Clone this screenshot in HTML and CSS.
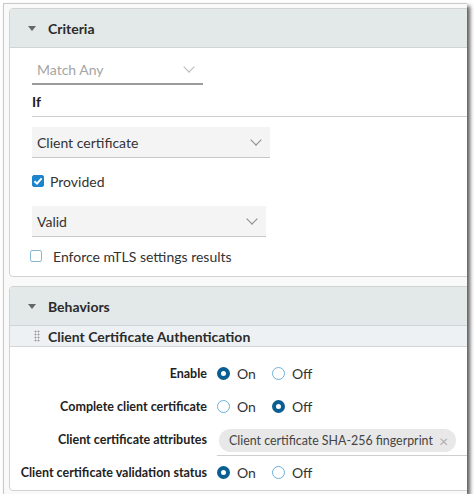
FILE: index.html
```html
<!DOCTYPE html>
<html lang="en">
<head>
    <meta charset="UTF-8">
    <meta name="viewport" content="width=device-width, initial-scale=1.0">
    <title>Rule editor</title>
    <link rel="stylesheet" href="styles.css">
</head>
<body>
    <div class="window">
        <!-- Criteria -->
        <section class="panel criteria">
            <div class="panel-head">
                <span class="caret"></span>
                <span class="panel-title">Criteria</span>
            </div>
            <div class="panel-body">
                <div class="select match">
                    <span>Match Any</span>
                    <span class="chevron"></span>
                </div>
                <div class="if-row">If</div>
                <div class="select filled wide">
                    <span>Client certificate</span>
                    <span class="chevron"></span>
                </div>
                <label class="check-row">
                    <span class="checkbox checked">
                        <svg viewBox="0 0 12 12" width="12" height="12"><path d="M2.5 6.2 L5 8.6 L9.6 3.4" fill="none" stroke="#fff" stroke-width="2"/></svg>
                    </span>
                    Provided
                </label>
                <div class="select filled valid">
                    <span>Valid</span>
                    <span class="chevron"></span>
                </div>
                <label class="check-row enforce">
                    <span class="checkbox"></span>
                    Enforce mTLS settings results
                </label>
            </div>
        </section>

        <!-- Behaviors -->
        <section class="panel behaviors">
            <div class="panel-head">
                <span class="caret"></span>
                <span class="panel-title">Behaviors</span>
            </div>
            <div class="sub-head">
                <span class="grip"></span>
                Client Certificate Authentication
            </div>
            <div class="options">
                <div class="opt-label">Enable</div>
                <div class="opt-value">
                    <span class="radio on"></span><span class="radio-text">On</span>
                    <span class="radio"></span><span class="radio-text">Off</span>
                </div>

                <div class="opt-label">Complete client certificate</div>
                <div class="opt-value">
                    <span class="radio"></span><span class="radio-text">On</span>
                    <span class="radio on"></span><span class="radio-text">Off</span>
                </div>

                <div class="opt-label">Client certificate attributes</div>
                <div class="opt-value tags">
                    <span class="tag">Client certificate SHA-256 fingerprint <span class="tag-x">&times;</span></span>
                </div>

                <div class="opt-label">Client certificate validation status</div>
                <div class="opt-value">
                    <span class="radio on"></span><span class="radio-text">On</span>
                    <span class="radio"></span><span class="radio-text">Off</span>
                </div>
            </div>
        </section>
    </div>
</body>
</html>
```

FILE: styles.css
```css
/* Page */
body {
    margin: 0;
    background: #fff;
    font-family: Lato, "Open Sans", sans-serif;
    color: #333;
}

/* Screenshot window frame */
.window {
    margin: 3px 0 0 3px;
    width: 458px;
    height: 486px;
    padding: 4px 0 0 5px;
    border-left: 1px solid #c9c9c9;
    border-top: 1px solid #c9c9c9;
    background: #f9f9f9;
    box-shadow: 3px 3px 4px rgba(0, 0, 0, 0.65);
    overflow: hidden;
}

/* Panels */
.panel {
    width: 480px;
    background: #fff;
    border: 1px solid #d2d2d2;
    border-radius: 4px;
}

.behaviors {
    margin-top: 9px;
    height: 203px;
}

.panel-head {
    height: 38px;
    display: flex;
    align-items: center;
    background: #e3e8e9;
    border-bottom: 1px solid #cfd4d5;
    border-radius: 4px 4px 0 0;
}

.caret {
    width: 0;
    height: 0;
    margin: 0 12px 0 18px;
    border-left: 4.5px solid transparent;
    border-right: 4.5px solid transparent;
    border-top: 5px solid #666;
}

.panel-title {
    font-size: 14px;
    font-weight: bold;
    color: #2b2b2b;
}

.panel-body {
    padding: 7px 0 8px 22px;
}

/* Selects */
.select {
    display: flex;
    align-items: center;
    justify-content: space-between;
    height: 29px;
    padding: 0 10px 0 5px;
    font-size: 14px;
    box-sizing: border-box;
}

.select.match {
    width: 171px;
    color: #a5a5a5;
    border-bottom: 2px solid #9c9c9c;
    height: 30px;
}

.select.filled {
    background: #f4f4f4;
    border-bottom: 1px solid #c8c8c8;
    height: 31px;
    color: #333;
}

.select.wide {
    width: 238px;
    margin-top: 10px;
}

.select.valid {
    width: 234px;
    margin-top: 13px;
}

.chevron {
    width: 7px;
    height: 7px;
    border-right: 1.3px solid #8a8a8a;
    border-bottom: 1.3px solid #8a8a8a;
    transform: rotate(45deg);
    margin-top: -5px;
}

.match .chevron {
    border-color: #b8b8b8;
}

.if-row {
    height: 31px;
    line-height: 33px;
    font-size: 14px;
    font-weight: bold;
    color: #222;
    border-bottom: 1px solid #cfcfcf;
}

/* Checkboxes */
.check-row {
    display: flex;
    align-items: center;
    font-size: 14px;
    color: #333;
    height: 24px;
    margin-top: 11px;
}

.checkbox {
    width: 12px;
    height: 12px;
    box-sizing: border-box;
    border: 1.5px solid #8ab7d4;
    border-radius: 2px;
    margin-right: 6px;
    display: flex;
}

.checkbox.checked {
    background: #1e85cc;
    border-color: #1e85cc;
}

.checkbox svg {
    margin: -1.5px;
}

.check-row.enforce {
    margin-top: 7px;
    margin-left: -2px;
}

.enforce .checkbox {
    margin-right: 11px;
}

/* Behaviors sub header */
.sub-head {
    height: 20px;
    display: flex;
    align-items: center;
    background: #eef1f3;
    border-bottom: 1px solid #d2d6d8;
    font-size: 14px;
    font-weight: bold;
    color: #2b2b2b;
}

.grip {
    width: 6px;
    height: 12px;
    margin: 0 8px 0 24px;
    background-image: radial-gradient(circle, #9a9a9a 0.9px, transparent 1.1px);
    background-size: 3px 3px;
}

/* Option grid */
.options {
    display: grid;
    grid-template-columns: 197px 1fr;
    column-gap: 10px;
    padding-top: 10px;
}

.opt-label,
.opt-value {
    height: 33px;
    display: flex;
    align-items: center;
}

.opt-label {
    justify-content: flex-end;
    font-size: 12.5px;
    font-weight: bold;
    color: #222;
}

.opt-value {
    font-size: 14px;
    color: #333;
}

.radio {
    width: 13px;
    height: 13px;
    box-sizing: border-box;
    border: 1.3px solid #6fb1da;
    border-radius: 50%;
    margin-right: 7px;
}

.radio.on {
    border: 4px solid #0a5e92;
}

.radio-text {
    margin-right: 16px;
}

.tags {
    box-sizing: border-box;
    border-bottom: 1px solid #cfcfcf;
    padding: 3px 0 0 2px;
}

.tag {
    display: inline-flex;
    align-items: center;
    height: 23px;
    padding: 0 8px 0 10px;
    background: #e8e8e8;
    border-radius: 12px;
    font-size: 12.4px;
    color: #444;
}

.tag-x {
    margin-left: 6px;
    color: #b0b0b0;
    font-size: 16px;
    line-height: 1;
}
```
